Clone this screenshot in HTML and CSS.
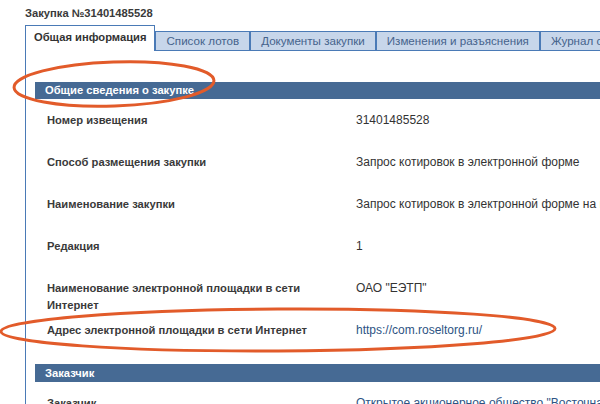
FILE: index.html
```html
<!DOCTYPE html>
<html lang="ru">
<head>
    <meta charset="UTF-8">
    <meta name="viewport" content="width=device-width, initial-scale=1.0">
    <title>Закупка №31401485528</title>
    <link rel="stylesheet" href="styles.css">
</head>
<body>
    <div class="page">
        <div class="title">Закупка №31401485528</div>

        <div class="tabs">
            <div class="tab active">Общая информация</div>
            <div class="tab">Список лотов</div>
            <div class="tab">Документы закупки</div>
            <div class="tab">Изменения и разъяснения</div>
            <div class="tab">Журнал событий</div>
        </div>

        <div class="panel">
            <div class="section-head">Общие сведения о закупке</div>
            <div class="row">
                <div class="label">Номер извещения</div>
                <div class="value">31401485528</div>
            </div>
            <div class="row">
                <div class="label">Способ размещения закупки</div>
                <div class="value">Запрос котировок в электронной форме</div>
            </div>
            <div class="row">
                <div class="label">Наименование закупки</div>
                <div class="value">Запрос котировок в электронной форме на право заключения договора</div>
            </div>
            <div class="row">
                <div class="label">Редакция</div>
                <div class="value">1</div>
            </div>
            <div class="row">
                <div class="label">Наименование электронной площадки в сети Интернет</div>
                <div class="value">ОАО "ЕЭТП"</div>
            </div>
            <div class="row">
                <div class="label">Адрес электронной площадки в сети Интернет</div>
                <div class="value"><a href="#">https://com.roseltorg.ru/</a></div>
            </div>

            <div class="section-head second">Заказчик</div>
            <div class="row">
                <div class="label">Заказчик</div>
                <div class="value"><a href="#">Открытое акционерное общество "Восточная нефтяная компания"</a></div>
            </div>
        </div>
    </div>

    <!-- hand-drawn marks over the screenshot -->
    <svg class="marks" width="600" height="404" viewBox="0 0 600 404">
        <ellipse cx="114" cy="84" rx="100" ry="22" transform="rotate(-2 114 84)"></ellipse>
        <ellipse cx="278" cy="330" rx="277" ry="21" transform="rotate(-0.3 278 330)"></ellipse>
    </svg>
</body>
</html>
```

FILE: styles.css
```css
html, body {
    margin: 0;
    padding: 0;
    overflow: hidden;
    background-color: white;
}
body {
    font-family: "Liberation Sans", Arial, sans-serif;
    font-size: 12px;
    color: #333;
    position: relative;
    width: 600px;
    height: 404px;
}
.page {
    padding: 6px 0 0 25px;
    width: 900px;
}
.title {
    line-height: 15px;
    font-size: 11.2px;
    font-weight: bold;
    color: #3a3a3a;
}
.tabs {
    display: flex;
    align-items: flex-end;
    margin-top: 4px;
}
.tab {
    height: 18px;
    line-height: 18px;
    padding: 0 10px;
    border: 1px solid #4a7ab6;
    background-color: #c7d6ea;
    color: #45638c;
    font-size: 11.6px;
    white-space: nowrap;
}
.tab.active {
    height: 25px;
    line-height: 22px;
    border-bottom: none;
    background-color: white;
    color: #333;
    font-size: 11.2px;
    font-weight: bold;
    padding: 0 8px;
}
.panel {
    border-left: 1px solid #4a7ab6;
    padding: 31px 0 40px 9px;
}
.section-head {
    background-color: #466a94;
    color: white;
    font-size: 11.2px;
    font-weight: bold;
    height: 17px;
    line-height: 17px;
    padding-left: 10px;
}
.section-head.second {
    margin-top: 13px;
    height: 18px;
    line-height: 18px;
}
.row {
    display: grid;
    grid-template-columns: 280px 1fr;
    column-gap: 29px;
    height: 42px;
    box-sizing: border-box;
    padding: 13px 0 0 12px;
    line-height: 17px;
}
.label {
    font-size: 11.2px;
    font-weight: bold;
    color: #3a3a3a;
}
.value {
    white-space: nowrap;
}
.value a {
    color: #2d5383;
    text-decoration: none;
}
.marks {
    position: absolute;
    left: 0;
    top: 0;
    pointer-events: none;
}
.marks ellipse {
    fill: none;
    stroke: #e25b2a;
    stroke-width: 3;
}
```
